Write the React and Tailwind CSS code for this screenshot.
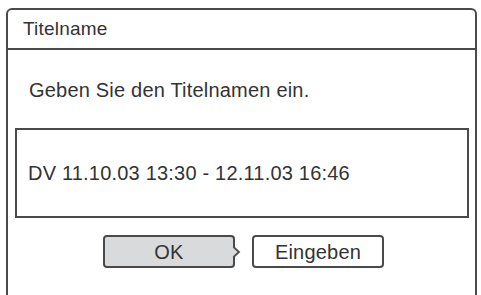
const font = { fontFamily: '"Liberation Sans", Arial, sans-serif' };

const App = () => {
    return (
        <div className="w-[481px] h-[295px] bg-white overflow-hidden pt-[8px] pl-[6px]" style={font}>
            <div className="w-[471px] h-[300px] border-2 border-b-0 border-[#4a4a4a] rounded-t-[6px] text-[#333] tracking-[0.2px]">
                <div className="h-[40px] border-b-2 border-[#4a4a4a] pt-[8px] pl-[15px] text-[19px] leading-[22px]">
                    Titelname
                </div>
                <div className="pt-[28px] pl-[21px] text-[20px] leading-[24px]">
                    Geben Sie den Titelnamen ein.
                </div>
                <div className="mt-[26px] ml-[7px] w-[454px] h-[90px] border-2 border-[#4a4a4a] flex items-center pl-[11px] text-[20px] leading-[24px]">
                    DV 11.10.03 13:30 - 12.11.03 16:46
                </div>
                <div className="mt-[17px] ml-[95px] flex gap-[17px] text-[20px] leading-[24px]">
                    <div className="relative w-[132px] h-[33px] bg-[#d9dadb] border-2 border-[#4a4a4a] rounded-[4px] flex items-center justify-center">
                        OK
                        <svg className="absolute right-[-8px] top-[9px]" width="8" height="12" viewBox="0 0 8 12">
                            <polygon points="0,0 1,1 6,6 1,11 0,12" fill="#d9dadb" />
                            <polyline points="0,0.5 6,6 0,11.5" fill="none" stroke="#4a4a4a" strokeWidth="1.8" />
                        </svg>
                    </div>
                    <div className="w-[132px] h-[33px] bg-white border-2 border-[#4a4a4a] rounded-[4px] flex items-center justify-center">
                        Eingeben
                    </div>
                </div>
            </div>
        </div>
    );
};

export default App;
